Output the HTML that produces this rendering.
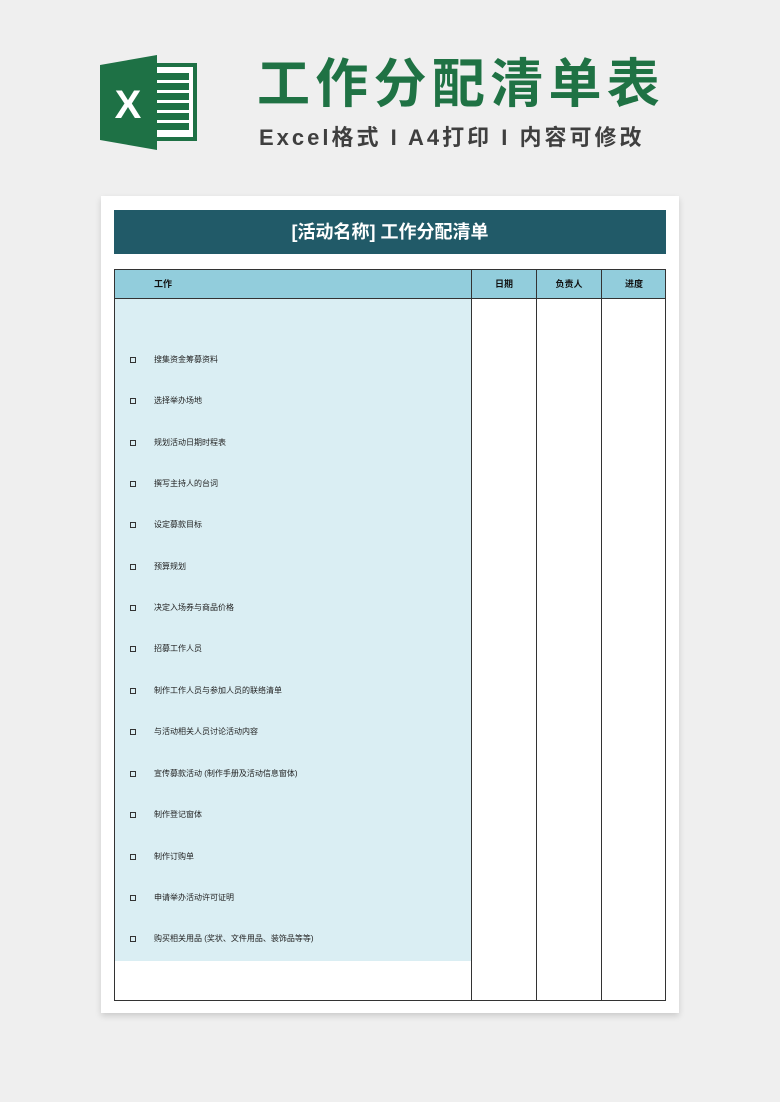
<!DOCTYPE html>
<html><head><meta charset="utf-8"><style>
body{margin:0;width:780px;height:1102px;background:#efefef;font-family:"Liberation Sans","Noto Sans CJK SC",sans-serif;position:relative;overflow:hidden}
.abs{position:absolute}
.title{left:257px;top:52px;font-size:53px;font-weight:bold;color:#1f7244;letter-spacing:5.3px;white-space:nowrap;line-height:66px}
.sub{left:259px;top:122px;font-size:22px;font-weight:bold;color:#3f3f3f;letter-spacing:3px;white-space:nowrap;line-height:32px}
.card{left:101px;top:196px;width:578px;height:817px;background:#fff;box-shadow:0 3px 6px rgba(0,0,0,0.15)}
.bar{left:114px;top:210px;width:552px;height:44px;background:#215a68;color:#fff;font-size:18px;font-weight:bold;text-align:center;line-height:44px}
.tbl{left:114px;top:269px;width:550px;height:730px;border:1px solid #333;background:#fff}
.hd{left:0;top:0;width:550px;height:28px;background:#92cddc;border-bottom:1px solid #333}
.lb{left:0;top:29px;width:356px;height:662px;background:#daeef3}
.vl{top:0;width:1px;height:730px;background:#333}
.h{top:0;height:28px;line-height:28px;font-size:9px;font-weight:bold;color:#111;text-align:center}
.row{left:0;width:356px;font-size:8px;color:#222;line-height:12px;white-space:nowrap}
.row i{position:absolute;left:15px;top:3px;width:4px;height:4px;border:1px solid #333}
.row span{position:absolute;left:39px;top:0}
</style></head><body>
<svg class="abs" style="left:100px;top:55px" width="98" height="95" viewBox="0 0 98 95">
<rect x="44" y="8" width="53" height="78" fill="#1e7145"/>
<rect x="48" y="12" width="45" height="70" fill="#fff"/>
<g fill="#1e7145"><rect x="56" y="18" width="33" height="7"/><rect x="56" y="28" width="33" height="7"/><rect x="56" y="38" width="33" height="7"/><rect x="56" y="48" width="33" height="7"/><rect x="56" y="58" width="33" height="7"/><rect x="56" y="68" width="33" height="7"/></g>
<polygon points="0,10 57,0 57,95 0,85" fill="#1e7145"/>
<text x="28" y="63" font-family="Liberation Sans" font-weight="bold" font-size="40" fill="#fff" text-anchor="middle">X</text>
</svg>
<div class="abs title">工作分配清单表</div>
<div class="abs sub">Excel格式 I A4打印 I 内容可修改</div>
<div class="abs card"></div>
<div class="abs bar">[活动名称] 工作分配清单</div>
<div class="abs tbl">
<div class="abs lb"></div>
<div class="abs hd"></div>
<div class="abs h" style="left:39px;text-align:left">工作</div>
<div class="abs h" style="left:357px;width:64px">日期</div>
<div class="abs h" style="left:422px;width:64px">负责人</div>
<div class="abs h" style="left:487px;width:64px">进度</div>
<div class="abs vl" style="left:356px"></div>
<div class="abs vl" style="left:421px"></div>
<div class="abs vl" style="left:486px"></div>
<div class="abs row" style="top:84px"><i></i><span>搜集资金筹募资料</span></div>
<div class="abs row" style="top:125px"><i></i><span>选择举办场地</span></div>
<div class="abs row" style="top:167px"><i></i><span>规划活动日期时程表</span></div>
<div class="abs row" style="top:208px"><i></i><span>撰写主持人的台词</span></div>
<div class="abs row" style="top:249px"><i></i><span>设定募款目标</span></div>
<div class="abs row" style="top:291px"><i></i><span>预算规划</span></div>
<div class="abs row" style="top:332px"><i></i><span>决定入场券与商品价格</span></div>
<div class="abs row" style="top:373px"><i></i><span>招募工作人员</span></div>
<div class="abs row" style="top:415px"><i></i><span>制作工作人员与参加人员的联络清单</span></div>
<div class="abs row" style="top:456px"><i></i><span>与活动相关人员讨论活动内容</span></div>
<div class="abs row" style="top:498px"><i></i><span>宣传募款活动 (制作手册及活动信息窗体)</span></div>
<div class="abs row" style="top:539px"><i></i><span>制作登记窗体</span></div>
<div class="abs row" style="top:581px"><i></i><span>制作订购单</span></div>
<div class="abs row" style="top:622px"><i></i><span>申请举办活动许可证明</span></div>
<div class="abs row" style="top:663px"><i></i><span>购买相关用品 (奖状、文件用品、装饰品等等)</span></div>
</div>
</body></html>
